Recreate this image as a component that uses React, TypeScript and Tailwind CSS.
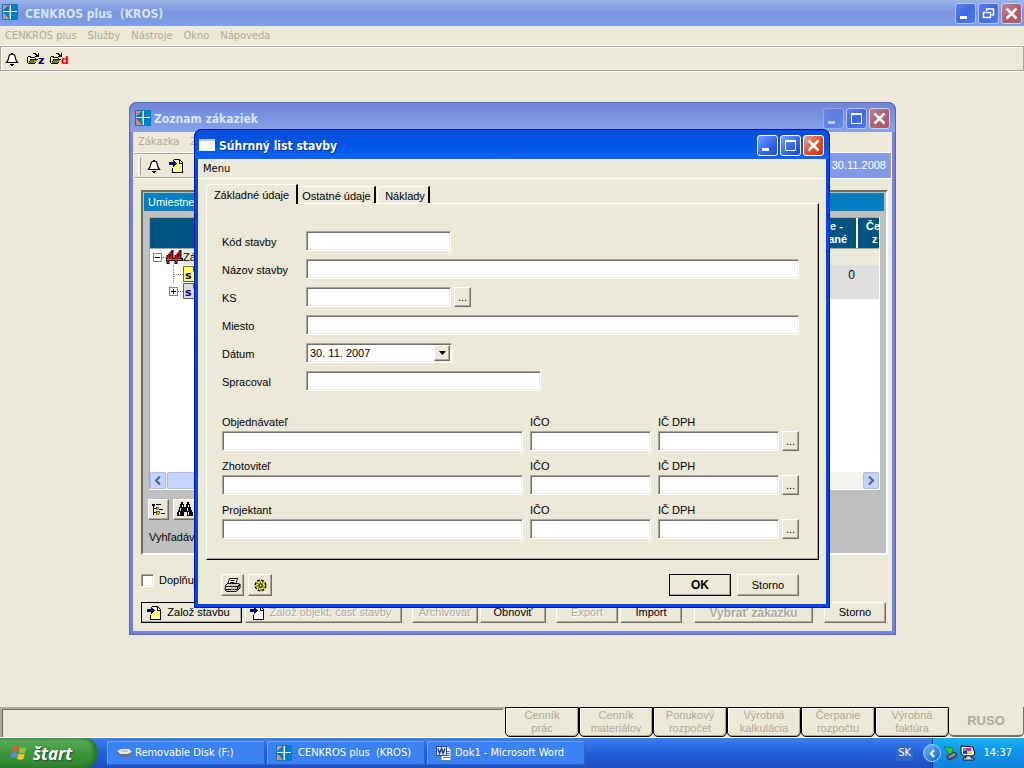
import type { ReactNode } from "react";

const tahoma = "[font-family:'DejaVu_Sans_Condensed','Liberation_Sans',sans-serif]";
const sunken =
    "border border-[#aca899] border-r-white border-b-white shadow-[inset_1px_1px_0_#716f64,inset_-1px_-1px_0_#f1efe2]";
const raised =
    "bg-[#ece9d8] border border-white border-r-[#716f64] border-b-[#716f64] shadow-[inset_-1px_-1px_0_#aca899]";
const etched = "text-[#aca899] [text-shadow:1px_1px_0_#ffffff]";

/* ---------- icons ---------- */

function CrossLogo({ className = "" }: { className?: string }) {
    return (
        <svg width="16" height="16" viewBox="0 0 16 16" className={className} shapeRendering="crispEdges">
            <rect width="16" height="16" fill="#0080c0" />
            <path d="M1 1h5L1 6zM1 9l5 5v1H1z" fill="#f08080" />
            <path d="M8 1h1v14H8zM1 7h14v1H1z" fill="#fff" />
            <path d="M7 1h1v14H7z" fill="#fff" opacity=".4" />
        </svg>
    );
}

function BellIcon() {
    return (
        <svg width="14" height="14" viewBox="0 0 14 14">
            <path d="M6 1.500h2M4.500 3C3.500 4.500 4 8 1.500 10.500h11C10 8 10.500 4.500 9.500 3 8.500 2 5.500 2 4.500 3z" fill="#fff" stroke="#000" strokeWidth="1.200" />
            <path d="M5 12h4v1H8v1H6v-1H5z" fill="#000" />
        </svg>
    );
}

function FolderIcon({ letter, color }: { letter: string; color: string }) {
    return (
        <svg width="19" height="14" viewBox="0 0 19 14">
            <g shapeRendering="crispEdges">
                <path d="M1 5h3v1h4v2H4l-2 3H1z" fill="#ffff80" />
                <path d="M1 4h3v1h4v1h1v1H8V6H3V5H1v6H0V5h1zM3 7h8v1h-1v1H9v2H8v1H1v-1h1V9h1z" fill="#000" />
                <path d="M4 8h6L8 11H2z" fill="#808000" />
                <path d="M5 2h1V1h3v1h1v1h1V1h1v4H8V4h1V3H8V2z" fill="#000" />
            </g>
            <text x="11" y="12" fontSize="11" fontWeight="bold" fontFamily="DejaVu Sans" fill={color}>
                {letter}
            </text>
        </svg>
    );
}

function ImportIcon({ paper = "#ffff80" }: { paper?: string }) {
    return (
        <svg width="14" height="14" viewBox="0 0 14 14" shapeRendering="crispEdges">
            <path d="M4 1h6l3 3v9H4z" fill={paper} />
            <path d="M5 0h6v1h1v1h1v1h1v11H3V9h1v4h9V5h-3V1H5z" fill="#000" />
            <path d="M11 2h1v1h1v1h-2z" fill="#fff" />
            <path d="M0 3h4V1h1v1h1v1h1v1h1v1H7v1H6v1H5v1H4V6H0z" fill="#000080" />
        </svg>
    );
}

function TreeIcon() {
    return (
        <svg width="15" height="14" viewBox="0 0 15 14" shapeRendering="crispEdges">
            <path d="M1 1h3v2H1zM2 3h1v9H2zM3 5h3v1H3zM3 9h2v1H3zM5 1h5v1H5zM8 6h4v1H8zM10 10h4v1h-4z" fill="#000" />
            <path d="M5 4h2v2H5zM5 8h3v3H5z" fill="#c0c000" stroke="#000" strokeWidth=".5" />
        </svg>
    );
}

function BinocularsIcon() {
    return (
        <svg width="16" height="15" viewBox="0 0 16 15" shapeRendering="crispEdges">
            <path d="M4 0h2v2h1v3h2V2h1V0h2v2h1v3h1v3h1v2h1v4h-6v-4H7v4H0v-4h1V8h1V5h1V2h1z" fill="#000" />
            <path d="M5 3h1v2H5zM3 6h1v3H3zM2 10h1v3H2zM11 3h1v2h-1zM10 6h1v3h-1zM11 10h1v3h-1z" fill="#fff" />
        </svg>
    );
}

function PrinterIcon() {
    return (
        <svg width="17" height="16" viewBox="0 0 17 16">
            <path d="M5.500 1.500h8l-2 6h-8z" fill="#fff" stroke="#000" />
            <path d="M6.500 3.500h4M6 5.500h4" stroke="#000" />
            <path d="M1.500 8.500l2-2h11l1.500 1-2 2.500v3l-2 1.500h-9l-2-1.500z" fill="#d4d0c8" stroke="#000" />
            <path d="M1.500 9.500h12v3h-12M14 9l2-2v4l-2 2" fill="none" stroke="#000" />
            <path d="M7 12h4" stroke="#e0d000" />
        </svg>
    );
}

function GearIcon() {
    return (
        <svg width="13" height="13" viewBox="0 0 13 13">
            <circle cx="6.500" cy="6.500" r="4" fill="none" stroke="#000" strokeWidth="4" strokeDasharray="2.100 1.040" />
            <circle cx="6.500" cy="6.500" r="3" fill="none" stroke="#808000" strokeWidth="2.500" />
            <circle cx="6.500" cy="6.500" r="3.500" fill="none" stroke="#ffff40" strokeWidth="2" strokeDasharray="1.500 1.250" />
            <circle cx="6.500" cy="6.500" r="1.500" fill="#fff" stroke="#000" />
        </svg>
    );
}

function BridgeIcon() {
    return (
        <svg width="17" height="14" viewBox="0 0 17 14">
            <path d="M3 6l3-4v9M2 5v9M11 6l3-4v9M10 5v9" fill="none" stroke="#000" strokeWidth="3" />
            <path d="M0 9.500h17" stroke="#000" strokeWidth="3" />
            <path d="M2 13V6l3.500-4v8.500M2 8h3M10 13V6l3.500-4v8.500M10 8h3" fill="none" stroke="#f00000" strokeWidth="1.500" />
            <path d="M1 9.500h15" stroke="#808080" />
        </svg>
    );
}

function SheetIcon({ paper }: { paper: string }) {
    return (
        <svg width="16" height="16" viewBox="0 0 16 16">
            <path d="M.5 .5h10l5 5v10H.5z" fill={paper} stroke="#606060" />
            <path d="M10.500 .5v5h5" fill="#fff" stroke="#606060" />
            <text x="2" y="13" fontSize="11" fontWeight="bold" fontFamily="DejaVu Sans" fill="#000080">
                s
            </text>
        </svg>
    );
}

function WindowsFlag() {
    return (
        <svg width="19" height="18" viewBox="0 0 19 18">
            <path d="M3.500 2.500C6 1.200 7.500 1.600 9 2.600L7.700 8C6 7 4.500 7 2.200 8z" fill="#f0582a" />
            <path d="M10 3c2 1.200 4 1.200 6.500 0l-1.400 5.400c-2.400 1.200-4.400 1-6.400-.2z" fill="#8cc63e" />
            <path d="M2 9c2.300-1.200 3.800-1 5.500 0l-1.300 5.300c-1.700-1-3.400-1-5.600.2z" fill="#5c8fe8" />
            <path d="M8.400 9.400c2 1 4 1.200 6.400.1l-1.400 5.400c-2.300 1.200-4.400 1-6.400-.2z" fill="#fbc624" />
        </svg>
    );
}

function DiskIcon() {
    return (
        <svg width="16" height="16" viewBox="0 0 16 16">
            <path d="M1 6l4-2h8l3 3-4 2H4z" fill="#e8e8e8" />
            <path d="M1 6l3 3v2L1 8zM4 9h8l4-2v2l-4 3H6z" fill="#6f6f6f" />
            <path d="M5 6h7" stroke="#aaa" />
        </svg>
    );
}

function WordIcon() {
    return (
        <svg width="16" height="16" viewBox="0 0 16 16">
            <path d="M5 1.500h7l3 3v11H5z" fill="#fff" stroke="#5a78b8" />
            <path d="M11 6.500h3M11 8.500h3M11 10.500h3M7 12.500h7" stroke="#5a78b8" />
            <rect x=".5" y="1.500" width="10" height="9" fill="#e6eefc" stroke="#2a4a98" />
            <path d="M2 3.500l1.500 5 2-5 1.500 5 2-5" fill="none" stroke="#1f3f94" strokeWidth="1.500" />
        </svg>
    );
}

function EjectIcon() {
    return (
        <svg width="15" height="16" viewBox="0 0 15 16">
            <path d="M4 11l7-4 3 2-1 3-7 3-2-2z" fill="#5a6068" stroke="#2f3338" />
            <path d="M6 12l6-3" stroke="#c8ccd0" />
            <path d="M8.500 9L4 8l1-1.500C2.500 5.500 2 3.500 2 1c1.500 1.500 3 2 5 2l.5-1.500L10 4z" fill="#3fc43a" stroke="#14701a" strokeWidth=".7" />
        </svg>
    );
}

function MonitorIcon() {
    return (
        <svg width="16" height="16" viewBox="0 0 16 16">
            <path d="M1 1l12 1 2 7-3 2H3L1 8z" fill="#fff" stroke="#000" />
            <path d="M3 3h3v3H3z" fill="#00e040" />
            <path d="M6 3h5v3H6z" fill="#f000f0" />
            <path d="M3 6h4v3H3z" fill="#0040ff" />
            <path d="M7 6h5v3H7z" fill="#f0e000" />
            <path d="M6 11h5v2h3v2H3v-2h3z" fill="#e0e0e0" stroke="#000" strokeWidth=".8" />
        </svg>
    );
}

/* ---------- window parts ---------- */

function ControlButton({ kind, dim }: { kind: "min" | "max" | "restore" | "close"; dim?: boolean }) {
    const active = kind === "close"
        ? "border-white bg-linear-to-br from-[#f0a088] via-[#e0532c] to-[#c03810]"
        : "border-white bg-linear-to-br from-[#7ba2f5] via-[#3a6cf0] to-[#1a48d8]";
    const faded = kind === "close"
        ? "border-[#c8d4f4] bg-linear-to-br from-[#c08090] via-[#b06070] to-[#a85c68]"
        : "border-[#b4c6f4] bg-linear-to-br from-[#5c80ec] via-[#4468e4] to-[#4c7cf0]";
    return (
        <button aria-label={kind} className={`flex size-[21px] items-center justify-center rounded-[3px] border ${dim ? faded : active}`}>
            <svg width="19" height="19" viewBox="0 0 19 19" fill="none" stroke="#fff" className="shrink-0">
                {kind === "min" && <path d="M4 13.500h7" strokeWidth="3" />}
                {kind === "max" && <path d="M4.500 4v10.500h10V4" strokeWidth="1" />}
                {kind === "max" && <path d="M4 5h11" strokeWidth="2" />}
                {kind === "restore" && <path d="M7.500 7V5h7v6h-2M4.500 8.500h7v5h-7zM7 5h8M4 8.500h8" strokeWidth="1.500" />}
                {kind === "close" && <path d="M4.500 4.500l10 10M14.500 4.500l-10 10" strokeWidth="2.500" />}
            </svg>
        </button>
    );
}

function PushButton({ children, className = "", label }: { children: ReactNode; className?: string; label?: string }) {
    return (
        <button aria-label={label} className={`flex shrink-0 items-center justify-center whitespace-nowrap ${className} ${raised}`}>
            {children}
        </button>
    );
}

function Field({ id, label, width, children }: { id: string; label: string; width: string; children?: ReactNode }) {
    return (
        <div className="flex items-center">
            <label htmlFor={id} className="w-[84px] shrink-0 pt-[2px]">{label}</label>
            <input id={id} className={`h-5 bg-white px-1 outline-none ${width} ${sunken}`} />
            {children}
        </div>
    );
}

function PartyRow({ name, id }: { name: string; id: string }) {
    return (
        <div className="flex items-end gap-[7px]">
            <div className="flex flex-1 flex-col">
                <label htmlFor={id} className="pb-[2px] leading-[14px]">{name}</label>
                <input id={id} className={`h-5 w-full bg-white px-1 outline-none ${sunken}`} />
            </div>
            <div className="flex w-[121px] flex-col">
                <label htmlFor={`${id}-ico`} className="pb-[2px] leading-[14px]">IČO</label>
                <input id={`${id}-ico`} className={`h-5 w-full bg-white px-1 outline-none ${sunken}`} />
            </div>
            <div className="flex items-end gap-[3px]">
                <div className="flex w-[121px] flex-col">
                    <label htmlFor={`${id}-dph`} className="pb-[2px] leading-[14px]">IČ DPH</label>
                    <input id={`${id}-dph`} className={`h-5 w-full bg-white px-1 outline-none ${sunken}`} />
                </div>
                <PushButton className="h-5 w-[17px]">...</PushButton>
            </div>
        </div>
    );
}

/* ---------- order list window ---------- */

function OrdersWindow() {
    return (
        <section className="absolute top-[30px] left-[129px] flex w-[767px] flex-col rounded-t-lg border-x-4 border-b-4 border-[#7482dc] bg-[#ece9d8] outline outline-[#5a62c0] -outline-offset-1">
            <header className="-mx-1 flex h-[30px] items-center rounded-t-lg bg-linear-to-b from-[#6f86d8] via-[#7c94e0] to-[#86a2e8] pt-[2px] pr-[6px] pl-[6px]">
                <CrossLogo />
                <h2 className={`flex-1 pt-px pl-[3px] text-xs font-bold text-[#d8e4f8] ${tahoma}`}>Zoznam zákaziek</h2>
                <div className="flex gap-[2px]">
                    <div className="opacity-50"><ControlButton kind="min" dim /></div>
                    <ControlButton kind="max" dim />
                    <ControlButton kind="close" dim />
                </div>
            </header>
            <nav className={`flex h-5 items-center gap-[11px] px-[5px] text-[11px] text-[#aca899] ${tahoma}`}>
                <a href="#">Zákazka</a>
                <a href="#">Z</a>
            </nav>
            <div className="flex h-[27px] items-center border border-white pr-px pl-1 shadow-[inset_0_1px_0_#aca899,inset_-1px_-1px_0_#aca899]">
                <div className="h-5 w-[3px] border border-white border-r-[#aca899]" />
                <div className="flex flex-1 items-center gap-2 pl-[6px]">
                    <BellIcon />
                    <ImportIcon />
                </div>
                <time className="flex h-[25px] items-center bg-[#849ae8] pr-1 pl-3 text-white">30.11.2008</time>
            </div>

            <div className="flex flex-col pt-[11px] pr-1 pb-2 pl-2">
                <div className="border-2 border-[#716f64] border-r-white border-b-white bg-[#c0c0c0]">
                    <h3 className="m-px mr-[2px] h-[18px] bg-[#0080c0] px-1 leading-[18px] text-white">Umiestnenie</h3>
                    <div className="mt-[6px] mr-[6px] ml-[6px] flex h-[273px] flex-col border border-[#aca899] border-r-white border-b-white bg-white">
                        <div className="flex h-[31px] justify-end overflow-hidden border-b border-[#aca899] bg-[#005580] text-center leading-[13px] font-bold text-white">
                            <div className="flex w-[88px] items-center justify-center border-r-2 border-white pl-[6px]">
                                Čerpanie -<br />fakturované
                            </div>
                            <div className="w-[21px] overflow-hidden pt-[2px] pl-2 text-left">
                                Če<br /><span className="pl-[6px]">z</span>
                            </div>
                        </div>
                        <div className="flex flex-1">
                            <div className="flex flex-1 flex-col pl-[3px]">
                                <div className="flex h-4 items-center">
                                    <span className="flex size-[9px] items-center justify-center border border-[#848284] leading-none"><i className="h-px w-[5px] bg-black" /></span>
                                    <span className="w-1 border-t border-dotted border-[#848284]" />
                                    <BridgeIcon />
                                    <span className="bg-[#ece9d8] leading-4">Zákazky</span>
                                </div>
                                <div className="ml-5 flex h-[18px] items-center border-l border-dotted border-[#848284]">
                                    <span className="w-[9px] border-t border-dotted border-[#848284]" />
                                    <SheetIcon paper="#ffff60" />
                                </div>
                                <div className="flex h-4 items-center pl-4">
                                    <span className="relative flex size-[9px] items-center justify-center border border-[#848284]">
                                        <i className="h-px w-[5px] bg-black" />
                                        <i className="absolute h-[5px] w-px bg-black" />
                                    </span>
                                    <span className="w-[5px] border-t border-dotted border-[#848284]" />
                                    <SheetIcon paper="#dcdcdc" />
                                </div>
                            </div>
                            <div className="w-[120px]">
                                <div className="h-4 bg-[#ece9d8]" />
                                <div className="h-[34px] bg-[#dfdfdf] pt-[2px] pr-6 text-right text-xs">0</div>
                            </div>
                        </div>
                        <div className="flex h-[17px] justify-between bg-[#f4f3ee]">
                            <div className="flex">
                                <button aria-label="Doľava" className="flex w-4 items-center justify-center rounded-xs border border-[#a8bcf0] bg-[#c4d4fc]">
                                    <svg width="8" height="9" viewBox="0 0 8 9" fill="none" stroke="#4d6185" strokeWidth="2"><path d="M6 .5l-4 4 4 4" /></svg>
                                </button>
                                <div className="ml-px w-40 rounded-xs border border-[#a8bcf0] bg-[#c4d4fc]" />
                            </div>
                            <button aria-label="Doprava" className="flex w-4 items-center justify-center rounded-xs border border-[#a8bcf0] bg-[#c4d4fc]">
                                <svg width="8" height="9" viewBox="0 0 8 9" fill="none" stroke="#4d6185" strokeWidth="2"><path d="M2 .5l4 4-4 4" /></svg>
                            </button>
                        </div>
                    </div>
                    <div className="mt-[9px] flex gap-1 pl-[5px]">
                        <PushButton label="Strom" className="h-[21px] w-[21px]"><TreeIcon /></PushButton>
                        <PushButton label="Hľadať" className="h-[21px] w-[23px]"><BinocularsIcon /></PushButton>
                    </div>
                    <p className="px-[6px] pt-[9px] pb-2 leading-4">Vyhľadávanie</p>
                </div>

                <label className="flex items-center gap-[5px] pt-[17px] leading-4">
                    <input type="checkbox" className={`size-[13px] appearance-none bg-white ${sunken}`} />
                    Doplňujúce
                </label>

                <div className="mt-[14px] flex items-center pr-[2px]">
                    <PushButton className="h-[21px] w-[101px] gap-[6px] pr-[6px] outline outline-black -outline-offset-1"><ImportIcon />Založ stavbu</PushButton>
                    <PushButton className={`ml-[3px] h-[21px] w-[157px] gap-[6px] pr-[6px] ${etched}`}><ImportIcon paper="#ffffff" />Založ objekt, časť stavby</PushButton>
                    <PushButton className={`ml-[10px] h-[21px] w-[66px] ${etched}`}>Archivovať</PushButton>
                    <PushButton className="ml-[2px] h-[21px] w-[66px]">Obnoviť</PushButton>
                    <PushButton className={`ml-[10px] h-[21px] w-[62px] ${etched}`}>Export</PushButton>
                    <PushButton className="ml-[2px] h-[21px] w-[62px]">Import</PushButton>
                    <PushButton className={`ml-3 h-[21px] w-[119px] text-xs font-bold ${etched}`}>Vybrať zákazku</PushButton>
                    <PushButton className="ml-auto h-[21px] w-[62px]">Storno</PushButton>
                </div>
            </div>
        </section>
    );
}

/* ---------- building summary dialog ---------- */

function SummaryDialog() {
    return (
        <section className="absolute top-[57px] left-[194px] flex w-[636px] flex-col rounded-t-lg border-x-4 border-b-4 border-[#0044ee] bg-[#ece9d8] outline outline-[#0018a0] -outline-offset-1">
            <header className="-mx-1 flex h-[30px] items-center rounded-t-lg bg-linear-to-b from-[#0a50d8] via-[#0055e5] to-[#0464f8] pt-[2px] pr-[6px] pl-[5px]">
                <svg width="16" height="12" viewBox="0 0 16 12"><rect width="16" height="12" fill="#fff" /><path d="M0 0h16v2H0z" fill="#a8c8f0" /></svg>
                <h2 className={`flex-1 pt-px pl-1 text-xs font-bold text-white [text-shadow:1px_1px_0_#0030a0] ${tahoma}`}>Súhrnný list stavby</h2>
                <div className="flex gap-[2px]">
                    <ControlButton kind="min" />
                    <ControlButton kind="max" />
                    <ControlButton kind="close" />
                </div>
            </header>
            <nav className={`flex h-5 items-center border-b border-white px-[5px] pt-px text-[11px] ${tahoma}`}>
                <a href="#">Menu</a>
            </nav>

            <div className="flex flex-col pt-[5px] pr-[7px] pb-2 pl-2">
                <div role="tablist" className="relative z-10 -mb-px flex items-end">
                    <button role="tab" aria-selected="true" className="h-5 w-[92px] rounded-tl-sm border-t border-r-2 border-l border-t-white border-r-black border-l-white bg-[#ece9d8] pt-px">Základné údaje</button>
                    <button role="tab" aria-selected="false" className="mb-px h-[17px] w-[78px] border-t border-r-2 border-t-white border-r-black pt-px pl-px">Ostatné údaje</button>
                    <button role="tab" aria-selected="false" className="mb-px ml-px h-[17px] w-[53px] rounded-tl-sm border-t border-r-2 border-l border-t-white border-r-black border-l-white pt-px pl-1">Náklady</button>
                </div>
                <div className="flex flex-col border border-white border-r-black border-b-black pt-[27px] pr-[19px] pb-5 pl-[15px] shadow-[inset_-1px_-1px_0_#aca899]">
                    <div className="flex flex-col gap-2">
                        <Field id="kod" label="Kód stavby" width="w-[145px]" />
                        <Field id="nazov" label="Názov stavby" width="flex-1" />
                        <Field id="ks" label="KS" width="w-[145px]">
                            <PushButton className="ml-[3px] h-5 w-[17px]">...</PushButton>
                        </Field>
                        <Field id="miesto" label="Miesto" width="flex-1" />
                        <div className="flex items-center">
                            <label htmlFor="datum" className="w-[84px] pt-[2px]">Dátum</label>
                            <div className="relative">
                                <select id="datum" className={`h-5 w-[146px] appearance-none bg-white pl-[3px] outline-none ${sunken}`}>
                                    <option>30. 11. 2007</option>
                                </select>
                                <span className={`pointer-events-none absolute top-[2px] right-[2px] flex h-4 w-4 items-center justify-center ${raised}`}>
                                    <svg width="7" height="4" viewBox="0 0 7 4"><path d="M0 0h7L3.500 4z" /></svg>
                                </span>
                            </div>
                        </div>
                        <Field id="spracoval" label="Spracoval" width="w-[235px]" />
                    </div>
                    <div className="mt-6 flex flex-col gap-2">
                        <PartyRow id="objednavatel" name="Objednávateľ" />
                        <PartyRow id="zhotovitel" name="Zhotoviteľ" />
                        <PartyRow id="projektant" name="Projektant" />
                    </div>
                </div>

                <div className="mt-[14px] flex pr-5 pl-[15px]">
                    <PushButton label="Tlačiť" className="h-[22px] w-[23px]"><PrinterIcon /></PushButton>
                    <PushButton label="Nastavenia" className="ml-1 h-[22px] w-[24px]"><GearIcon /></PushButton>
                    <PushButton className="ml-auto h-[22px] w-[62px] text-xs font-bold outline outline-black -outline-offset-1">OK</PushButton>
                    <PushButton className="ml-[6px] h-[22px] w-[62px]">Storno</PushButton>
                </div>
            </div>
        </section>
    );
}

/* ---------- bottom bars ---------- */

const modules = [
    ["Cenník", "prác"],
    ["Cenník", "materiálov"],
    ["Ponukový", "rozpočet"],
    ["Výrobná", "kalkulácia"],
    ["Čerpanie", "rozpočtu"],
    ["Výrobná", "faktúra"],
];

function ModuleBar() {
    return (
        <div className="flex h-[31px] border-b border-white text-[#aca899]">
            <div className="flex-1 border-2 border-b-0 border-[#aca899] border-r-[#ece9d8] shadow-[inset_1px_1px_0_#716f64]" />
            {modules.map(([top, bottom]) => (
                <button key={top + bottom} className="w-[74px] rounded-b-[5px] border border-black leading-[13px] shadow-[inset_1px_1px_0_#ffffff,inset_-1px_-1px_0_#aca899]">
                    {top}<br />{bottom}
                </button>
            ))}
            <button className="w-[75px] rounded-b-[5px] border-r border-b-2 border-[#716f64] text-[13px] font-bold">RUSO</button>
        </div>
    );
}

function TaskButton({ icon, children }: { icon: ReactNode; children: ReactNode }) {
    return (
        <button className="flex h-6 w-[158px] items-center gap-[3px] rounded-xs bg-[#3c81f3] px-[9px] whitespace-pre shadow-[inset_1px_1px_0_#6aa4fa,inset_-1px_-1px_0_#2a62d4]">
            {icon}
            {children}
        </button>
    );
}

function Taskbar() {
    return (
        <footer className={`flex h-[30px] items-center bg-linear-to-b from-[#3a80f0] via-[#245edb] to-[#1f50c0] text-[11px] text-white ${tahoma}`}>
            <button className="flex h-[30px] w-[97px] items-center gap-1 rounded-r-xl bg-linear-to-b from-[#5fb05f] via-[#3c963c] to-[#2f852f] pl-[10px] shadow-[inset_-3px_0_4px_#256b25]">
                <WindowsFlag />
                <span className="text-[17px] leading-none font-bold italic [font-family:'Open_Sans','Liberation_Sans',sans-serif] [text-shadow:1px_1px_2px_#1c4a1c]">štart</span>
            </button>
            <div className="flex flex-1 gap-[2px] pl-[10px]">
                <TaskButton icon={<DiskIcon />}>Removable Disk (F:)</TaskButton>
                <TaskButton icon={<CrossLogo className="mr-[3px]" />}>CENKROS plus  (KROS)</TaskButton>
                <TaskButton icon={<WordIcon />}>Dok1 - Microsoft Word</TaskButton>
            </div>
            <span className="mr-[19px] bg-[#316ac5] px-[2px] leading-4">SK</span>
            <div className="flex h-[30px] w-[92px] items-center border-l border-[#0a3a9c] bg-linear-to-b from-[#18b4f2] via-[#1290e8] to-[#0f84dc]">
                <button aria-label="Zobraziť skryté ikony" className="-ml-[10px] flex size-[18px] shrink-0 items-center justify-center rounded-full border border-[#a8d4fc] bg-linear-to-br from-[#6cb8fc] to-[#0c60d0]">
                    <svg width="7" height="9" viewBox="0 0 7 9" fill="none" stroke="#fff" strokeWidth="2"><path d="M5 1L2 4.500 5 8" /></svg>
                </button>
                <div className="flex flex-1 items-center gap-[2px] pl-[2px]">
                    <EjectIcon />
                    <MonitorIcon />
                </div>
                <time className="pr-3">14:37</time>
            </div>
        </footer>
    );
}

export default function App() {
    return (
        <div className="flex min-h-screen flex-col overflow-hidden bg-[#ece9d8] text-[11px] text-black [font-family:'Liberation_Sans',sans-serif]">
            <header className="flex h-[26px] items-center bg-linear-to-b from-[#9ab4ea] via-[#7a94e0] to-[#80a0e8] px-[2px]">
                <CrossLogo className="mb-[2px]" />
                <h1 className={`flex-1 pt-px pl-[7px] text-xs font-bold whitespace-pre text-[#d8e4f8] ${tahoma}`}>CENKROS plus  (KROS)</h1>
                <div className="flex gap-[2px]">
                    <ControlButton kind="min" dim />
                    <ControlButton kind="restore" dim />
                    <ControlButton kind="close" dim />
                </div>
            </header>
            <nav className={`flex h-[19px] items-center gap-[11px] px-[5px] pt-px text-[11px] text-[#aca899] ${tahoma}`}>
                <a href="#">CENKROS plus</a>
                <a href="#">Služby</a>
                <a href="#">Nástroje</a>
                <a href="#">Okno</a>
                <a href="#">Nápoveda</a>
            </nav>
            <div className="border-y border-white">
                <div className="flex h-[25px] items-center gap-1 border border-[#aca899] px-1 shadow-[inset_1px_1px_0_#ffffff]">
                    <button aria-label="Upozornenia" className="mr-1"><BellIcon /></button>
                    <button aria-label="Otvoriť zákazku"><FolderIcon letter="z" color="#000080" /></button>
                    <button aria-label="Otvoriť databázu"><FolderIcon letter="d" color="#ff0000" /></button>
                </div>
            </div>
            <main className="relative min-h-[600px] flex-1">
                <OrdersWindow />
                <SummaryDialog />
            </main>
            <ModuleBar />
            <Taskbar />
        </div>
    );
}
